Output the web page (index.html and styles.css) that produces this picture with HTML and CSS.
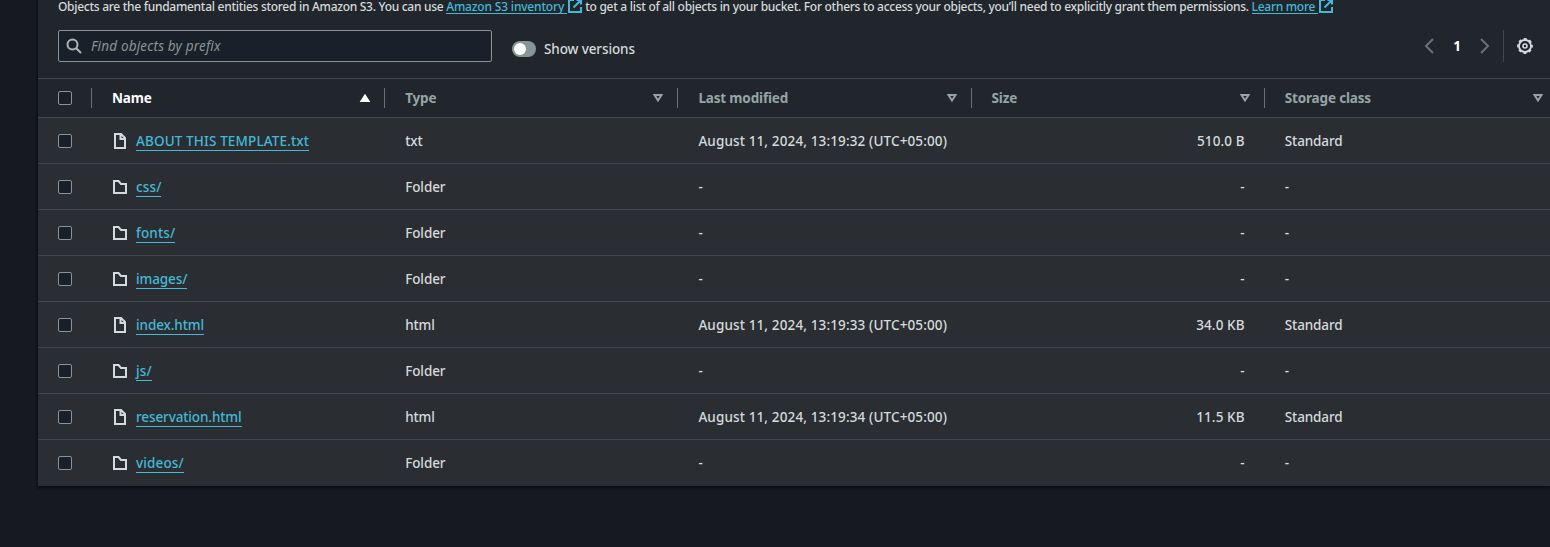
FILE: index.html
```
<!DOCTYPE html>
<html lang="en">
<head>
<meta charset="utf-8">
<title>Objects</title>
<link rel="stylesheet" href="styles.css">
</head>
<body>
<svg class="sprite" aria-hidden="true">
  <symbol id="file" viewBox="0 0 16 16"><path d="M3 1h6l4 4v10H3zM8.500 1.500V6H13"/></symbol>
  <symbol id="folder" viewBox="0 0 16 16"><path d="M2 2h4.500l2.500 3h5v9H2z"/></symbol>
  <symbol id="external" viewBox="0 0 16 16"><path d="M7 2H2v12h12V9M9.500 2H14v4.500M14 2L6.500 9.500"/></symbol>
  <symbol id="sort" viewBox="0 0 16 16"><path d="M4.500 5h7L8 10.500z"/></symbol>
</svg>
<main class="panel">
  <header class="top">
    <p class="description"><span>Objects are the fundamental entities stored in Amazon S3. You can use </span><a class="doc-link">Amazon S3 inventory </a><svg class="ext"><use href="#external"/></svg><span>to get a list of all objects in your bucket. For others to access your objects, you’ll need to explicitly grant them permissions. </span><a class="doc-link">Learn more </a><svg class="ext"><use href="#external"/></svg></p>
    <div class="tools">
      <div class="search">
        <svg class="icon" viewBox="0 0 16 16"><circle cx="6.500" cy="6.500" r="5"/><path d="M10.200 10.200L15 15"/></svg>
        <span class="placeholder">Find objects by prefix</span>
      </div>
      <div class="toggle"><span class="switch"></span><span>Show versions</span></div>
      <div class="pager">
        <svg class="chevron" viewBox="0 0 16 16"><path d="M12 1L5 8l7 7"/></svg>
        <b class="page">1</b>
        <svg class="chevron" viewBox="0 0 16 16"><path d="M4 1l7 7-7 7"/></svg>
        <div class="settings"><svg class="icon gear" viewBox="0 0 16 16"><circle cx="8" cy="8" r="6"/><circle class="teeth" cx="8" cy="8" r="7"/><circle class="hub" cx="8" cy="8" r="2"/></svg></div>
      </div>
    </div>
  </header>
  <section class="table">
    <div class="row head">
      <div class="cell check"><i class="box"></i></div>
      <div class="cell sorted"><span>Name</span><svg class="sort up"><use href="#sort"/></svg></div>
      <div class="cell"><span>Type</span><svg class="sort"><use href="#sort"/></svg></div>
      <div class="cell"><span>Last modified</span><svg class="sort"><use href="#sort"/></svg></div>
      <div class="cell"><span>Size</span><svg class="sort"><use href="#sort"/></svg></div>
      <div class="cell"><span>Storage class</span><svg class="sort"><use href="#sort"/></svg></div>
    </div>
    <div class="row"><div class="cell check"><i class="box"></i></div><div class="cell"><svg class="icon"><use href="#file"/></svg><a class="wide">ABOUT THIS TEMPLATE.txt</a></div><div class="cell">txt</div><div class="cell wide">August 11, 2024, 13:19:32 (UTC+05:00)</div><div class="cell size">510.0 B</div><div class="cell">Standard</div></div>
    <div class="row"><div class="cell check"><i class="box"></i></div><div class="cell"><svg class="icon"><use href="#folder"/></svg><a class="wide">css/</a></div><div class="cell">Folder</div><div class="cell">-</div><div class="cell size">-</div><div class="cell">-</div></div>
    <div class="row"><div class="cell check"><i class="box"></i></div><div class="cell"><svg class="icon"><use href="#folder"/></svg><a class="wide">fonts/</a></div><div class="cell">Folder</div><div class="cell">-</div><div class="cell size">-</div><div class="cell">-</div></div>
    <div class="row"><div class="cell check"><i class="box"></i></div><div class="cell"><svg class="icon"><use href="#folder"/></svg><a>images/</a></div><div class="cell">Folder</div><div class="cell">-</div><div class="cell size">-</div><div class="cell">-</div></div>
    <div class="row"><div class="cell check"><i class="box"></i></div><div class="cell"><svg class="icon"><use href="#file"/></svg><a>index.html</a></div><div class="cell">html</div><div class="cell wide">August 11, 2024, 13:19:33 (UTC+05:00)</div><div class="cell size">34.0 KB</div><div class="cell">Standard</div></div>
    <div class="row"><div class="cell check"><i class="box"></i></div><div class="cell"><svg class="icon"><use href="#folder"/></svg><a class="wide">js/</a></div><div class="cell">Folder</div><div class="cell">-</div><div class="cell size">-</div><div class="cell">-</div></div>
    <div class="row"><div class="cell check"><i class="box"></i></div><div class="cell"><svg class="icon"><use href="#file"/></svg><a>reservation.html</a></div><div class="cell">html</div><div class="cell wide">August 11, 2024, 13:19:34 (UTC+05:00)</div><div class="cell size">11.5 KB</div><div class="cell">Standard</div></div>
    <div class="row"><div class="cell check"><i class="box"></i></div><div class="cell"><svg class="icon"><use href="#folder"/></svg><a class="wide">videos/</a></div><div class="cell">Folder</div><div class="cell">-</div><div class="cell size">-</div><div class="cell">-</div></div>
  </section>
</main>
</body>
</html>
```
FILE: styles.css
```
* { box-sizing: border-box; }
body { margin: 0; height: 547px; overflow: hidden; background: #16191f; color: #d5dbdb; font: 500 13.5px/20px "Noto Sans", "Open Sans", sans-serif; letter-spacing: -0.11px; }
.sprite { display: none; }
svg { fill: none; stroke: currentColor; stroke-width: 2; flex: none; }
.panel { margin-left: 38px; height: 486px; background: #2a2e33; box-shadow: 0 1px 2px 1px #0b0d11; }
.top { height: 78px; padding-left: 20px; background: #21252c; }
.description { display: flex; margin: 0; height: 30px; padding-top: 1px; font-size: 12px; line-height: 12px; letter-spacing: -0.284px; white-space: pre; }
.doc-link { height: 13px; color: #44b9d6; border-bottom: 1px solid #44b9d6; }
.doc-link:first-of-type { width: 121px; letter-spacing: -0.18px; }
.ext { width: 16px; height: 16px; margin: -3px 2px 0 0; color: #44b9d6; }
.tools { display: flex; height: 32px; }
.search { display: flex; align-items: center; gap: 9px; width: 434px; height: 32px; padding-left: 7px; border: 1px solid #879596; border-radius: 2px; background: #1a2029; }
.search .icon { color: #aab7b8; }
.placeholder { color: #879596; font-style: italic; font-weight: 400; letter-spacing: 0.17px; }
.toggle { display: flex; align-items: center; gap: 8px; margin: 6px 0 0 20px; }
.switch { width: 24px; height: 16px; border-radius: 8px; background: #879596; }
.switch::before { content: ""; display: block; width: 12px; height: 12px; margin: 2px; border-radius: 50%; background: #fff; }
.pager { display: flex; align-items: center; margin-left: auto; padding-right: 17px; }
.chevron { width: 16px; height: 16px; color: #687078; }
.page { width: 40px; text-align: center; color: #fff; }
.settings { display: flex; align-items: center; height: 32px; margin-left: 10px; padding-left: 13px; border-left: 1px solid #414750; }
.icon { width: 16px; height: 16px; }
.gear { stroke-width: 1.8; }
.teeth { stroke-dasharray: 3 2.498; stroke-dashoffset: 1.5; }
.hub { stroke-width: 1.6; }
.table { width: 1512px; overflow: hidden; }
.row { display: grid; grid-template-columns: 54px repeat(5, 293.2px); width: 1520px; height: 46px; border-bottom: 1px solid #414750; }
.row:last-child { border-color: transparent; }
.cell { display: flex; align-items: center; padding: 1px 20px 0; white-space: nowrap; }
.cell .icon { margin-right: 8px; }
.cell a { height: 20px; color: #44b9d6; border-bottom: 1px solid #44b9d6; line-height: 20px; }
.wide, .size { letter-spacing: 0.13px; }
.size { justify-content: flex-end; }
.box { width: 14px; height: 14px; border: 1px solid #879596; border-radius: 2px; background: #1a2029; }
.head { height: 40px; border-top: 1px solid #414750; background: #21252c; color: #95a5a6; font-weight: 700; letter-spacing: -0.16px; }
.head .cell { position: relative; justify-content: space-between; padding-top: 0; padding-right: 12px; }
.head .cell:not(:last-child)::after { content: ""; position: absolute; right: 0; top: 9px; height: 20px; border-right: 1px solid #687078; }
.head .check::after { border-color: #414750; }
.head .sorted { color: #fff; }
.sort { width: 16px; height: 16px; }
.up { transform: scaleY(-1); }
.up use { fill: currentColor; }
```
